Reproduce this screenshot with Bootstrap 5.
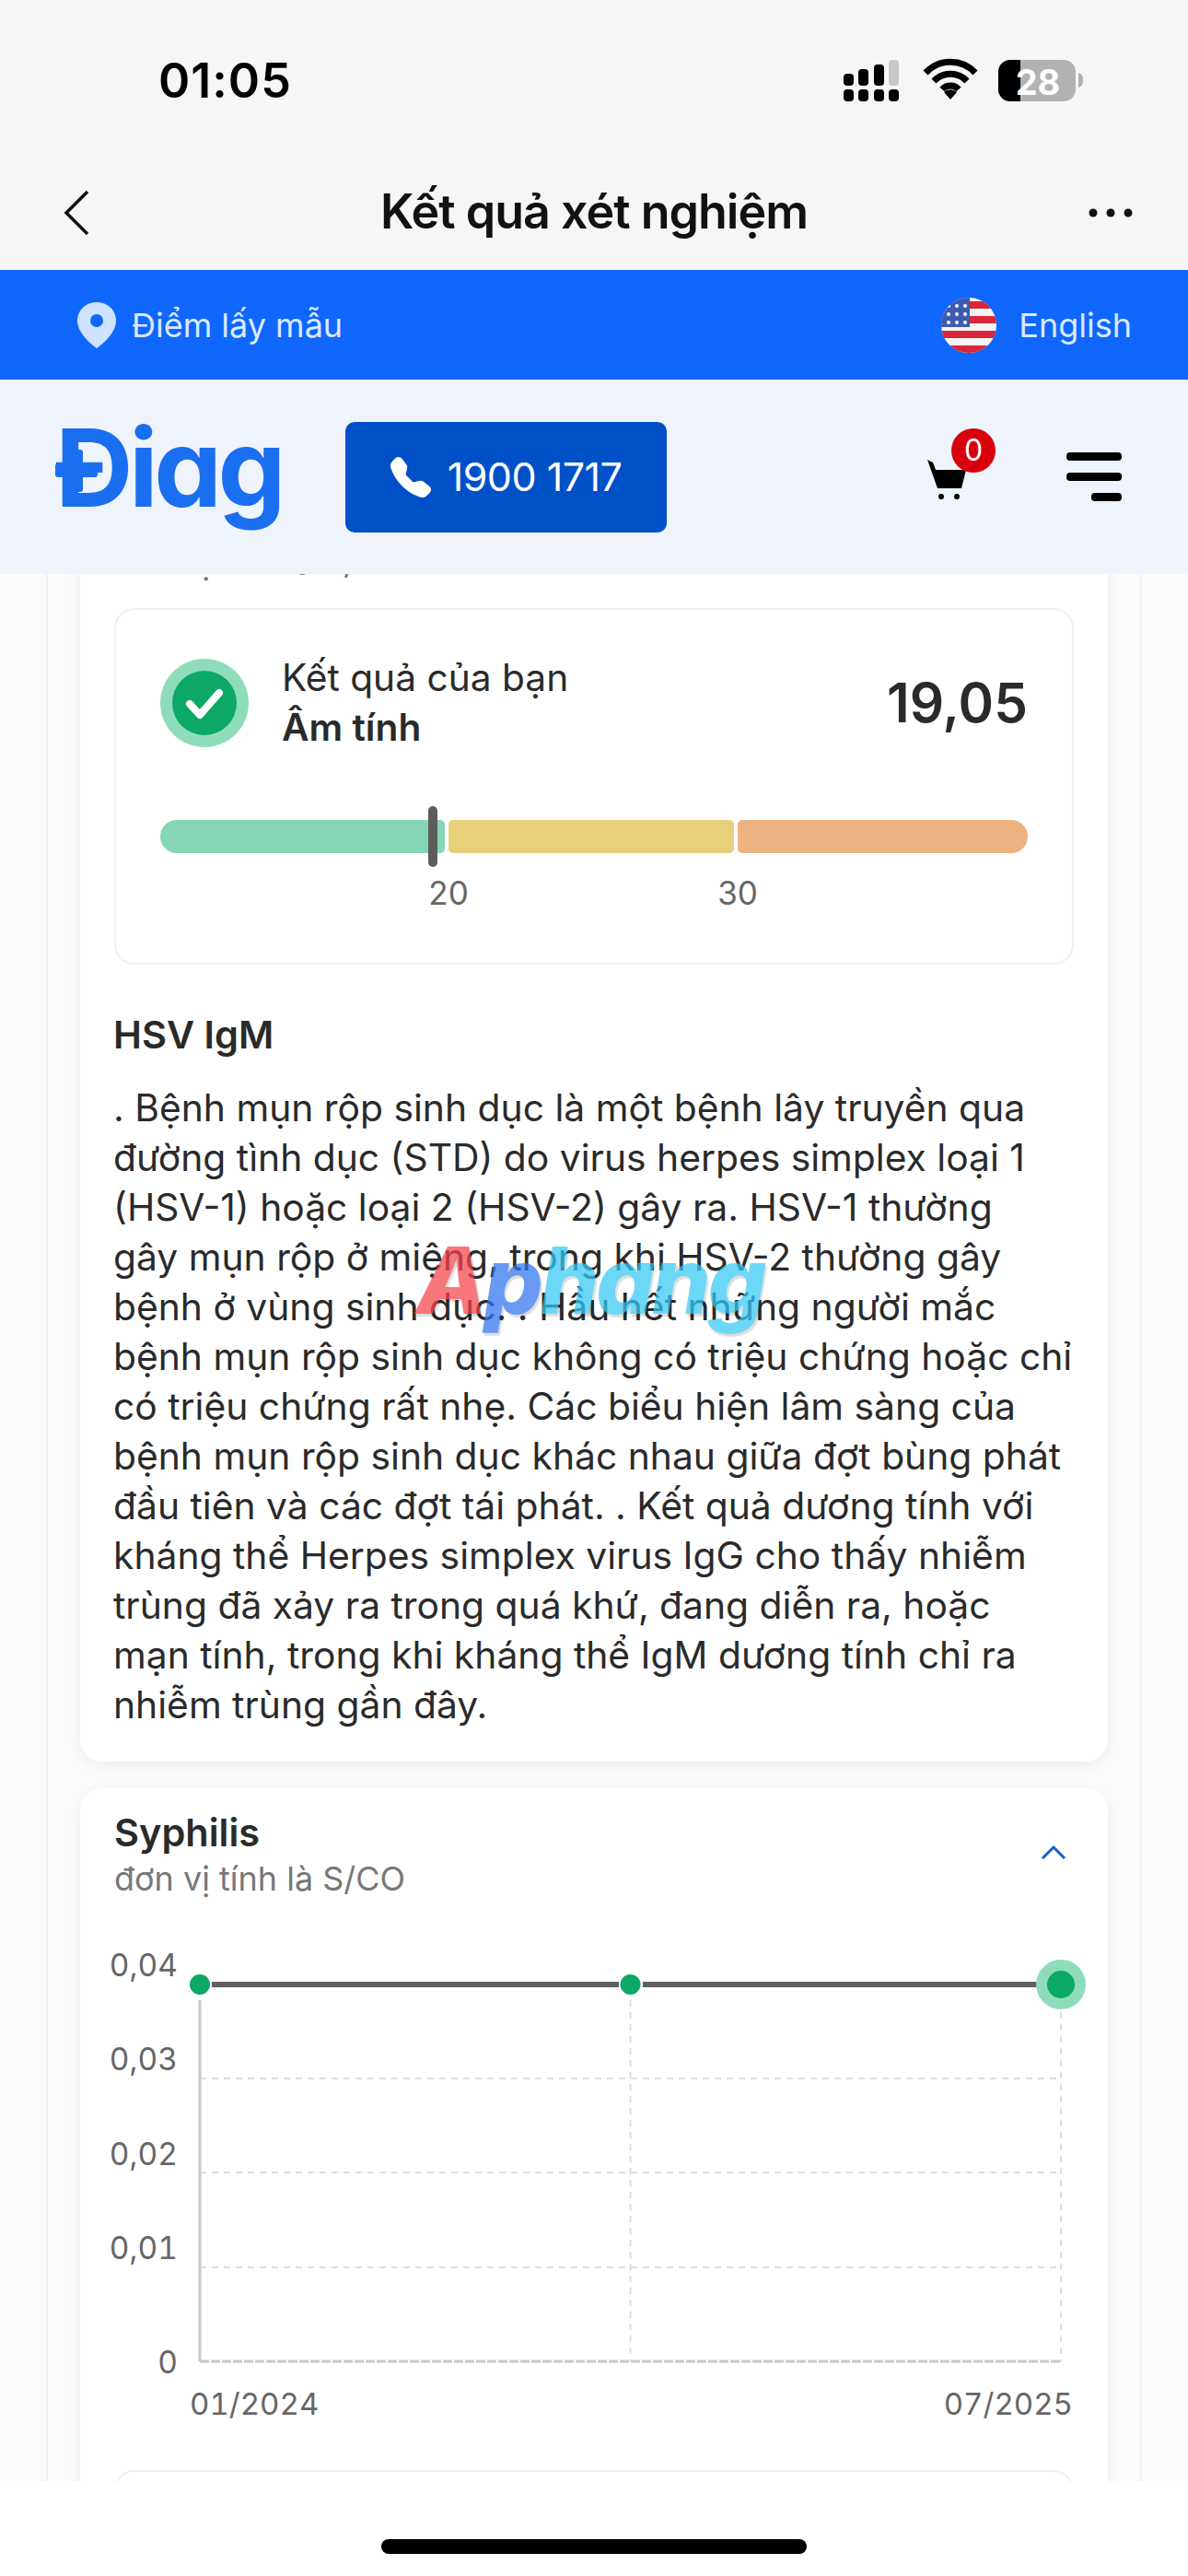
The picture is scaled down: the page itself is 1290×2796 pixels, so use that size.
<!DOCTYPE html>
<html lang="vi">
<head>
  <meta charset="UTF-8">
  <meta name="viewport" content="width=device-width, initial-scale=1.0">
  <title>Kết quả xét nghiệm</title>
  <link href="https://cdn.jsdelivr.net/npm/bootstrap@5.3.0/dist/css/bootstrap.min.css" rel="stylesheet">
  <style>
    body {
      font-family: Inter, "Noto Sans", sans-serif;
      color: #2a2a2a;
      background: #fff;
    }
    .screen { width: 1290px; height: 2796px; overflow: hidden; }
    .top-area { background: #f6f6f6; height: 293px; }
    .status-row { height: 176px; padding: 0 112px 0 172px; }
    .clock { font-size: 52px; font-weight: 600; color: #000; letter-spacing: 1px; }
    .title-row { height: 117px; padding: 0 60px 8px 68px; }
    .back-icon { margin-right: 10px; }
    .page-title { font-size: 52px; font-weight: 600; color: #111; letter-spacing: -1px; margin: 0; }
    .blue-bar { background: #0f67fd; height: 119px; padding: 0 61px 0 83px; color: #dbe8ff; font-size: 36px; }
    .light-bar { background: #eef3fc; height: 211px; padding: 0 72px 0 60px; }
    .brand-logo {
      font-size: 117px; font-weight: 700; color: #1a6ff0; line-height: 1; font-feature-settings: "cv11";
      letter-spacing: -4.500px; width: 315px; position: relative; margin-top: -20px;
    }
    .plus-h { position: absolute; left: 0; top: 54px; width: 46px; height: 15px; background: #1a6ff0; border-radius: 3px; }
    .plus-v { position: absolute; left: 15px; top: 39px; width: 15px; height: 46px; background: #1a6ff0; border-radius: 3px; }
    .call-btn {
      background: #0050c8; color: #fff; width: 349px; height: 120px;
      border-radius: 10px; font-size: 43px; border: 0; letter-spacing: -.5px; gap: 18px;
    }
    .cart-wrap { position: relative; width: 60px; height: 60px; margin-right: 93px; }
    .cart-svg { display: block; margin-top: 5px; }
    .cart-count {
      position: absolute; left: 28px; top: -23px; width: 48px; height: 48px; border-radius: 50%;
      background: #d9000d; color: #fff; font-size: 32px; line-height: 48px; text-align: center;
    }
    .burger { width: 60px; }
    .burger span { display: block; height: 9px; background: #000; border-radius: 4px; margin-bottom: 13px; }
    .burger span:last-child { width: 33px; margin: 0 0 0 auto; }
    .content-clip { height: 2070px; overflow: hidden; position: relative; background: #fbfbfb; }
    .side-panel {
      margin: -111px 50px 0; padding: 0 35px;
      border-left: 2px solid #f0f0f0; border-right: 2px solid #f0f0f0; height: 2300px;
    }
    .result-card {
      background: #fff; border: 0; border-radius: 24px; padding: 20px 37px 35px;
      box-shadow: 0 4px 14px rgba(0, 0, 0, .06); margin-bottom: 29px;
    }
    .card-name { font-size: 41.500px; font-weight: 600; line-height: 56px; margin: 0; }
    .card-unit { font-size: 36px; line-height: 44px; color: #777; }
    .result-box { border: 2px solid #f0f0f0; border-radius: 22px; margin-top: 28px; padding: 47px 48px 0; height: 387px; }
    .result-lbl { font-size: 40.700px; line-height: 54px; margin-left: 36px; }
    .result-val { font-size: 58.500px; font-weight: 600; }
    .range-wrap { position: relative; margin-top: 73px; height: 36px; }
    .range-seg { height: 36px; border-radius: 5px; }
    .col-low { flex: 309 1 0; }
    .col-mid { flex: 310 1 0; }
    .col-high { flex: 315 1 0; }
    .seg-green { background: #84d6b4; border-radius: 18px 5px 5px 18px; }
    .seg-yellow { background: #e8d07a; }
    .seg-orange { background: #edb27f; border-radius: 5px 18px 18px 5px; }
    .range-pin { position: absolute; top: -15px; width: 10px; height: 66px; border-radius: 5px; background: #5c5c5c; }
    .range-labels { font-size: 35px; color: #666; margin-top: 17px; }
    .range-labels span { display: inline-block; transform: translateX(calc(50% + 4px)); }
    .info-title { font-size: 41.500px; font-weight: 600; line-height: 56px; margin: 48px 0 24px -1px; }
    .info-text { font-size: 40.800px; line-height: 54px; margin: 0 0 0 -1px; white-space: nowrap; }
    .chart-area { display: block; margin: 0 -37px; }
    .chart-area text { font-family: Inter, "Noto Sans", sans-serif; font-size: 33.500px; fill: #666; font-feature-settings: "tnum"; }
    .chart-area .date-lbl { font-size: 33px; }
    .next-box { border: 2px solid #f0f0f0; border-radius: 22px; height: 60px; }
    .watermark {
      position: absolute; left: 452px; top: 717px; font-size: 100px; font-weight: 800; font-style: italic;
      line-height: 1; letter-spacing: -3px; opacity: .72; white-space: nowrap;
      text-shadow: 2px 3px 1px rgba(0, 0, 0, .18);
    }
    .wm-a { color: #f4434c; }
    .wm-p { color: #2f74f0; }
    .wm-rest { color: #35c8f5; }
    .bottom-bar { height: 103px; background: #fff; }
    .home-line { width: 462px; height: 16px; border-radius: 8px; background: #000; margin-top: 63px; }
  </style>
</head>
<body>
  <div class="screen d-flex flex-column">
    <div class="top-area">
      <div class="status-row d-flex align-items-center justify-content-between">
        <span class="clock">01:05</span>
        <svg width="272" height="50" viewBox="906 62 272 50">
          <g fill="#000">
            <rect x="916" y="79" width="11" height="13" rx="4"/>
            <rect x="932" y="74" width="11" height="18" rx="4"/>
            <rect x="949" y="69" width="11" height="23" rx="4"/>
            <rect x="916" y="96" width="11" height="13" rx="4"/>
            <rect x="932" y="96" width="11" height="13" rx="4"/>
            <rect x="949" y="96" width="11" height="13" rx="4"/>
            <rect x="965" y="96" width="11" height="13" rx="4"/>
          </g>
          <rect x="965" y="64" width="11" height="28" rx="4" fill="#c8c8c8"/>
          <path d="M1005 78a37 37 0 0 1 54 0M1014 87a25 25 0 0 1 36 0M1023 96a12 12 0 0 1 18 0" fill="none" stroke="#000" stroke-width="7"/>
          <path d="M1025 99a10 10 0 0 1 14 0l-7 8z" fill="#000"/>
          <rect x="1084" y="64" width="84" height="45" rx="13" fill="#b2b2b2"/>
          <path d="M1108 64h-11a13 13 0 0 0-13 13v19a13 13 0 0 0 13 13h11z" fill="#000"/>
          <path d="M1171 78c4 1 5 4 5 8s-1 7-5 8z" fill="#b2b2b2"/>
          <text x="1127" y="102" text-anchor="middle" font-family="Inter, sans-serif" font-size="38" font-weight="700" fill="#fff">28</text>
        </svg>
      </div>
      <div class="title-row d-flex align-items-center justify-content-between">
        <svg class="back-icon" width="30" height="50" viewBox="0 0 30 50"><path d="M27 2 4 25l23 23" fill="none" stroke="#111" stroke-width="3.5"/></svg>
        <h1 class="page-title">Kết quả xét nghiệm</h1>
        <svg width="48" height="10" viewBox="0 0 48 10" fill="#111"><circle cx="5" cy="5" r="4.5"/><circle cx="24" cy="5" r="4.5"/><circle cx="43" cy="5" r="4.5"/></svg>
      </div>
    </div>

    <div class="blue-bar d-flex align-items-center justify-content-between">
      <div class="d-flex align-items-center gap-3">
        <svg width="44" height="52" viewBox="0 0 44 52">
          <path d="M22 1C10 1 1 10 1 21c0 13 14 25 21 30 7-5 21-17 21-30C43 10 34 1 22 1z" fill="#cfe2ff"/>
          <circle cx="22" cy="21" r="7" fill="#0f67fd"/>
        </svg>
        <span>Điểm lấy mẫu</span>
      </div>
      <div class="d-flex align-items-center gap-4">
        <svg width="60" height="60" viewBox="0 0 60 60">
          <defs><clipPath id="flagClip"><circle cx="30" cy="30" r="30"/></clipPath></defs>
          <g clip-path="url(#flagClip)">
            <rect width="60" height="60" fill="#f4f4f4"/>
            <rect y="4" width="60" height="8" fill="#d8263a"/>
            <rect y="20" width="60" height="8" fill="#d8263a"/>
            <rect y="36" width="60" height="8" fill="#d8263a"/>
            <rect y="52" width="60" height="8" fill="#d8263a"/>
            <rect width="31" height="32" fill="#3b5cae"/>
            <g fill="#fff"><circle cx="8" cy="9" r="2"/><circle cx="17" cy="9" r="2"/><circle cx="26" cy="9" r="2"/><circle cx="8" cy="18" r="2"/><circle cx="17" cy="18" r="2"/><circle cx="26" cy="18" r="2"/><circle cx="8" cy="27" r="2"/><circle cx="17" cy="27" r="2"/><circle cx="26" cy="27" r="2"/></g>
          </g>
        </svg>
        <span>English</span>
      </div>
    </div>

    <nav class="light-bar d-flex align-items-center">
      <div class="brand-logo">Điag<span class="plus-h"></span><span class="plus-v"></span></div>
      <button class="btn call-btn d-flex align-items-center justify-content-center" type="button">
        <svg width="44" height="44" viewBox="0 0 16 16" fill="#fff"><path d="M1.885.511a1.745 1.745 0 0 1 2.61.163L6.29 2.98c.329.423.445.974.315 1.494l-.547 2.19a.678.678 0 0 0 .178.643l2.457 2.457a.678.678 0 0 0 .644.178l2.189-.547a1.745 1.745 0 0 1 1.494.315l2.306 1.794c.829.645.905 1.87.163 2.611l-1.034 1.034c-.74.74-1.846 1.065-2.877.702a18.634 18.634 0 0 1-7.01-4.42 18.634 18.634 0 0 1-4.42-7.009c-.362-1.03-.037-2.137.703-2.877L1.885.511z"/></svg>
        1900 1717
      </button>
      <div class="ms-auto d-flex align-items-center">
        <div class="cart-wrap">
          <svg class="cart-svg" width="50" height="50" viewBox="0 0 50 50">
            <path d="M2 6l6 3 3 8h33l-5 20H13z" fill="#000"/>
            <circle cx="17" cy="46" r="3" fill="#000"/><circle cx="34" cy="46" r="3" fill="#000"/>
          </svg>
          <span class="cart-count">0</span>
        </div>
        <div class="burger"><span></span><span></span><span></span></div>
      </div>
    </nav>

    <main class="content-clip">
      <div class="side-panel">
        <section class="card result-card">
          <h2 class="card-name">HSV IgG</h2>
          <div class="card-unit">đơn vị tính là S/CO</div>
          <div class="result-box">
            <div class="d-flex align-items-center">
              <svg width="96" height="96" viewBox="0 0 96 96">
                <circle cx="48" cy="48" r="48" fill="#8fdcbc"/>
                <circle cx="48" cy="48" r="35" fill="#0ba866"/>
                <path d="M32 49l11 12 21-24" fill="none" stroke="#fff" stroke-width="8" stroke-linecap="round" stroke-linejoin="round"/>
              </svg>
              <div class="flex-grow-1 result-lbl">
                <div>Kết quả của bạn</div>
                <div class="fw-semibold">Âm tính</div>
              </div>
              <div class="result-val">19,05</div>
            </div>
            <div class="range-wrap d-flex gap-1">
              <div class="range-seg seg-green col-low"></div>
              <div class="range-seg seg-yellow col-mid"></div>
              <div class="range-seg seg-orange col-high"></div>
              <div class="range-pin" style="left:30.9%"></div>
            </div>
            <div class="range-labels d-flex gap-1">
              <div class="text-end col-low"><span>20</span></div>
              <div class="text-end col-mid"><span>30</span></div>
              <div class="col-high"></div>
            </div>
          </div>
          <h3 class="info-title">HSV IgM</h3>
          <p class="info-text">. Bệnh mụn rộp sinh dục là một bệnh lây truyền qua<br>đường tình dục (STD) do virus herpes simplex loại 1<br>(HSV-1) hoặc loại 2 (HSV-2) gây ra. HSV-1 thường<br>gây mụn rộp ở miệng, trong khi HSV-2 thường gây<br>bệnh ở vùng sinh dục. . Hầu hết những người mắc<br>bệnh mụn rộp sinh dục không có triệu chứng hoặc chỉ<br>có triệu chứng rất nhẹ. Các biểu hiện lâm sàng của<br>bệnh mụn rộp sinh dục khác nhau giữa đợt bùng phát<br>đầu tiên và các đợt tái phát. . Kết quả dương tính với<br>kháng thể Herpes simplex virus IgG cho thấy nhiễm<br>trùng đã xảy ra trong quá khứ, đang diễn ra, hoặc<br>mạn tính, trong khi kháng thể IgM dương tính chỉ ra<br>nhiễm trùng gần đây.</p>
        </section>

        <section class="card result-card">
          <div class="d-flex align-items-center justify-content-between">
            <div>
              <h2 class="card-name">Syphilis</h2>
              <div class="card-unit">đơn vị tính là S/CO</div>
            </div>
            <svg class="me-2" width="28" height="18" viewBox="0 0 28 18"><path d="M2 15 14 3l12 12" fill="none" stroke="#0f5fd0" stroke-width="3"/></svg>
          </div>
          <svg class="chart-area" width="1115" height="620" viewBox="87 2060 1115 620">
            <g stroke="#dedede" stroke-width="2" stroke-dasharray="7 6" fill="none">
              <path d="M217 2255H1152M217 2357H1152M217 2460H1152M684.500 2170V2562M1152 2170V2562"/>
            </g>
            <path d="M217 2170V2562" stroke="#c8c8c8" stroke-width="3"/>
            <path d="M217 2562H1152" stroke="#c8c8c8" stroke-width="3" stroke-dasharray="10 2"/>
            <path d="M230 2153H672M698 2153H1140" stroke="#5f5f5f" stroke-width="6"/>
            <circle cx="217" cy="2153" r="11" fill="#0ba866"/>
            <circle cx="684.500" cy="2153" r="11" fill="#0ba866"/>
            <circle cx="1152" cy="2153" r="27" fill="#8fdcbc"/>
            <circle cx="1152" cy="2153" r="15" fill="#0ba866"/>
            <text x="193" y="2144" text-anchor="end">0,04</text>
            <text x="193" y="2246" text-anchor="end">0,03</text>
            <text x="193" y="2349" text-anchor="end">0,02</text>
            <text x="193" y="2451" text-anchor="end">0,01</text>
            <text x="193" y="2575" text-anchor="end">0</text>
            <text class="date-lbl" x="206" y="2620">01/2024</text>
            <text class="date-lbl" x="1165" y="2620" text-anchor="end">07/2025</text>
          </svg>
          <div class="next-box"></div>
        </section>
      </div>
      <div class="watermark"><span class="wm-a">A</span><span class="wm-p">p</span><span class="wm-rest">hang</span></div>
    </main>

    <div class="bottom-bar d-flex justify-content-center">
      <div class="home-line"></div>
    </div>
  </div>
  <script src="https://cdn.jsdelivr.net/npm/bootstrap@5.3.0/dist/js/bootstrap.bundle.min.js"></script>
</body>
</html>
